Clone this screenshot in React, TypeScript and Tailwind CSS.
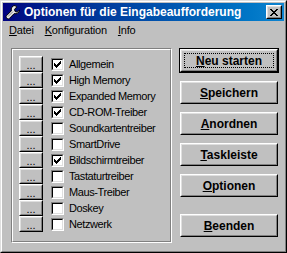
import React from "react";

const items = [
  { label: "Allgemein", checked: true },
  { label: "High Memory", checked: true },
  { label: "Expanded Memory", checked: true },
  { label: "CD-ROM-Treiber", checked: true },
  { label: "Soundkartentreiber", checked: false },
  { label: "SmartDrive", checked: false },
  { label: "Bildschirmtreiber", checked: true },
  { label: "Tastaturtreiber", checked: false },
  { label: "Maus-Treiber", checked: false },
  { label: "Doskey", checked: false },
  { label: "Netzwerk", checked: false },
];

const buttons = [
  { u: "S", rest: "peichern" },
  { u: "A", rest: "nordnen" },
  { u: "T", rest: "askleiste" },
  { u: "O", rest: "ptionen" },
];

function Raised({ className = "", children }: { className?: string; children?: React.ReactNode }) {
  return (
    <div className={`border border-t-white border-l-white border-r-black border-b-black ${className}`}>
      <div className="w-full h-full border border-t-[#dfdfdf] border-l-[#dfdfdf] border-r-[#808080] border-b-[#808080] bg-[#c0c0c0] flex items-center justify-center">
        {children}
      </div>
    </div>
  );
}

function CheckBox({ checked }: { checked: boolean }) {
  return (
    <div className="w-[13px] h-[13px] border border-t-[#808080] border-l-[#808080] border-r-white border-b-white">
      <div className="w-full h-full border border-t-black border-l-black border-r-[#dfdfdf] border-b-[#dfdfdf] bg-white">
        {checked && (
          <svg width="9" height="9" viewBox="0 0 9 9" className="block">
            <path d="M1 3h1v1h1v1h1V4h1V3h1V2h1V1h1v3H7v1H6v1H5v1H4v1H3V7H2V6H1z" fill="#000" />
          </svg>
        )}
      </div>
    </div>
  );
}

function Wrench() {
  return (
    <svg width="16" height="16" viewBox="0 0 16 16" className="block">
      <path
        d="M10 1.5a4 4 0 0 0-3.6 5.3L1.5 11.7a1.4 1.4 0 0 0 0 2l.8.8a1.4 1.4 0 0 0 2 0l4.9-4.9A4 4 0 0 0 14.5 6l-2.3 2.1-2.1-.6-.6-2.1L11.7 3a4 4 0 0 0-1.7-1.5z"
        fill="#e8e8e8"
        stroke="#000"
        strokeWidth="1"
      />
      <path d="M3 12.6l5-5" stroke="#808080" strokeWidth="1" />
    </svg>
  );
}

export default function App() {
  return (
    <div
      className="w-[287px] h-[253px] bg-[#c0c0c0] border border-t-[#dfdfdf] border-l-[#dfdfdf] border-r-black border-b-black"
      style={{ fontFamily: '"Liberation Sans", Arial, sans-serif' }}
    >
      <div className="w-full h-full border border-t-white border-l-white border-r-[#808080] border-b-[#808080] p-px flex flex-col">
        {/* title bar */}
        <div className="h-[18px] flex items-center bg-gradient-to-r from-[#000080] to-[#1084d0] pl-[2px] pr-[2px]">
          <Wrench />
          <span className="ml-[3px] text-white font-bold text-[12px] leading-none">
            Optionen für die Eingabeaufforderung
          </span>
          <Raised className="ml-auto w-[16px] h-[14px]">
            <svg width="8" height="7" viewBox="0 0 8 7" className="block">
              <path d="M0 0h2v1h1v1h2V1h1V0h2v1H7v1H6v1H5v1h1v1h1v1h1v1H6V6H5V5H3v1H2v1H0V6h1V5h1V4h1V3H2V2H1V1H0z" fill="#000" />
            </svg>
          </Raised>
        </div>

        {/* menu bar */}
        <div className="h-[19px] flex items-center text-[11px] tracking-[-0.2px] text-black pl-[6px]">
          <span><u>D</u>atei</span>
          <span className="ml-[11px]"><u>K</u>onfiguration</span>
          <span className="ml-[11px]"><u>I</u>nfo</span>
        </div>

        {/* content */}
        <div className="flex pl-[8px] pt-[8px]">
          {/* group box */}
          <div className="w-[161px] h-[195px] border border-t-[#808080] border-l-[#808080] border-r-white border-b-white">
            <div className="w-full h-full border border-t-white border-l-white border-r-[#808080] border-b-[#808080] pl-[6px] pt-[6px] flex flex-col">
              {items.map((it) => (
                <div key={it.label} className="h-[16px] flex items-center">
                  <Raised className="w-[24px] h-[16px]">
                    <span className="text-[11px] leading-none -mb-[2px] text-black">...</span>
                  </Raised>
                  <div className="ml-[8px] mt-[1px]">
                    <CheckBox checked={it.checked} />
                  </div>
                  <span className="ml-[5px] text-[11px] tracking-[-0.4px] text-black leading-none mt-[1px]">
                    {it.label}
                  </span>
                </div>
              ))}
            </div>
          </div>

          {/* button column */}
          <div className="ml-[7px] w-[100px] flex flex-col">
            <div className="w-[100px] h-[25px] border border-black">
              <Raised className="w-full h-full relative">
                <div className="absolute inset-[3px] border border-dotted border-black" />
                <span className="text-[12px] font-bold text-black leading-none"><u>N</u>eu starten</span>
              </Raised>
            </div>
            {buttons.map((b) => (
              <Raised key={b.u} className="ml-[1px] mt-[8px] w-[98px] h-[23px]">
                <span className="text-[12px] font-bold text-black leading-none"><u>{b.u}</u>{b.rest}</span>
              </Raised>
            ))}
            <Raised className="ml-[1px] mt-[17px] w-[98px] h-[23px]">
              <span className="text-[12px] font-bold text-black leading-none"><u>B</u>eenden</span>
            </Raised>
          </div>
        </div>
      </div>
    </div>
  );
}
